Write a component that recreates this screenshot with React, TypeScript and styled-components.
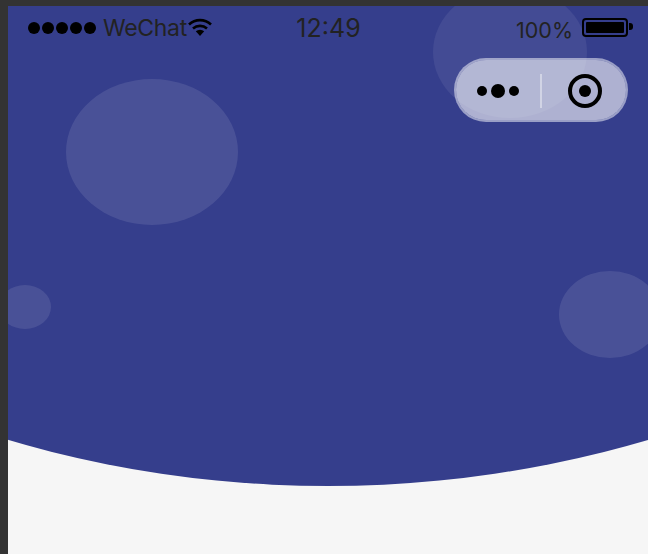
import React from "react";
import styled, { createGlobalStyle } from "styled-components";

const GlobalStyle = createGlobalStyle`
  html, body {
    margin: 0;
    padding: 0;
    height: 100%;
    background: #333333;
  }
`;

const Window = styled.div`
  width: 648px;
  height: 554px;
  padding: 6px 0 0 8px;
  box-sizing: border-box;
  overflow: hidden;
  background: #333333;
`;

const Page = styled.main`
  height: 548px;
  background: #f6f6f6;
  font-family: "Inter", "Liberation Sans", sans-serif;
`;

const Hero = styled.section`
  position: relative;
  height: 482px;
  padding: 0 20px;
  box-sizing: border-box;
  overflow: hidden;
  background: #353e8c;
  clip-path: circle(1136px at 320px -656px);
`;

const Bubble = styled.span<{ $x: number; $y: number; $w: number; $h: number; $alpha: number }>`
  position: absolute;
  left: ${(p) => p.$x}px;
  top: ${(p) => p.$y}px;
  width: ${(p) => p.$w}px;
  height: ${(p) => p.$h}px;
  border-radius: 50%;
  background: rgba(255, 255, 255, ${(p) => p.$alpha});
`;

const StatusBar = styled.header`
  position: relative;
  display: grid;
  grid-template-columns: 1fr auto 1fr;
  align-items: center;
  height: 44px;
  color: #222222;
`;

const StatusLeft = styled.div`
  display: flex;
  align-items: center;
`;

const Signal = styled.div`
  display: flex;
  gap: 2px;
  margin-right: 7px;
`;

const SignalDot = styled.i`
  width: 12px;
  height: 12px;
  border-radius: 50%;
  background: #000;
`;

const Carrier = styled.span`
  font-size: 23px;
  letter-spacing: -0.3px;
`;

const Clock = styled.span`
  font-size: 25px;
  margin: -1px 0 0 1px;
`;

const StatusRight = styled.div`
  display: flex;
  align-items: center;
  justify-content: flex-end;
  gap: 9px;
  margin-top: 4px;
`;

const Percent = styled.span`
  font-size: 21.5px;
`;

const Battery = styled.div`
  position: relative;
  width: 46px;
  height: 19px;
  margin: -6px 0 0 0;
  padding: 2px;
  box-sizing: border-box;
  border: 2px solid #000;
  border-radius: 4px;

  &::before {
    content: "";
    display: block;
    height: 100%;
    border-radius: 1px;
    background: #000;
  }

  &::after {
    content: "";
    position: absolute;
    right: -7px;
    top: 3px;
    width: 4px;
    height: 7px;
    border-radius: 0 3px 3px 0;
    background: #000;
  }
`;

const Capsule = styled.div`
  position: relative;
  display: flex;
  align-items: center;
  width: 174px;
  height: 64px;
  margin: 8px 0 0 426px;
  padding-top: 2px;
  box-sizing: border-box;
  border: 2px solid rgba(255, 255, 255, 0.5);
  border-radius: 32px;
  background: rgba(255, 255, 255, 0.6);
  background-clip: padding-box;
`;

const MenuButton = styled.div`
  flex: 1;
  display: flex;
  align-items: center;
  justify-content: center;
  gap: 4px;
`;

const MenuDot = styled.i<{ $size: number }>`
  width: ${(p) => p.$size}px;
  height: ${(p) => p.$size}px;
  border-radius: 50%;
  background: #000;
`;

const Divider = styled.div`
  width: 2px;
  height: 34px;
  background: rgba(255, 255, 255, 0.4);
`;

const CloseButton = styled.div`
  flex: 1;
  display: flex;
  align-items: center;
  justify-content: center;
`;

const Target = styled.div`
  display: flex;
  align-items: center;
  justify-content: center;
  width: 34px;
  height: 34px;
  margin-left: 2px;
  box-sizing: border-box;
  border: 4px solid #000;
  border-radius: 50%;

  &::after {
    content: "";
    width: 12px;
    height: 12px;
    border-radius: 50%;
    background: #000;
  }
`;

const WifiIcon = () => (
  <svg width="24" height="20" viewBox="0 0 24 20" style={{ marginLeft: 1 }}>
    <path d="M1 6.5 A16 16 0 0 1 23 6.5" fill="none" stroke="#000" strokeWidth="2.6" />
    <path d="M5 10.5 A10.5 10.5 0 0 1 19 10.5" fill="none" stroke="#000" strokeWidth="2.6" />
    <path d="M7.8 13.2 A6.4 6.4 0 0 1 16.2 13.2 L12 18 Z" fill="#000" />
  </svg>
);

const signal = [0, 1, 2, 3, 4];
const bubbles = [
  { x: 58, y: 73, w: 172, h: 146, alpha: 0.1 },
  { x: 425, y: -20, w: 154, h: 132, alpha: 0.07 },
  { x: -9, y: 279, w: 52, h: 44, alpha: 0.1 },
  { x: 551, y: 265, w: 102, h: 87, alpha: 0.1 },
];

export default function App() {
  return (
    <Window>
      <GlobalStyle />
      <Page>
        <Hero>
          {bubbles.map((b) => (
            <Bubble key={b.x} $x={b.x} $y={b.y} $w={b.w} $h={b.h} $alpha={b.alpha} />
          ))}
          <StatusBar>
            <StatusLeft>
              <Signal>
                {signal.map((n) => (
                  <SignalDot key={n} />
                ))}
              </Signal>
              <Carrier>WeChat</Carrier>
              <WifiIcon />
            </StatusLeft>
            <Clock>12:49</Clock>
            <StatusRight>
              <Percent>100%</Percent>
              <Battery />
            </StatusRight>
          </StatusBar>
          <Capsule>
            <MenuButton>
              <MenuDot $size={10} />
              <MenuDot $size={14} />
              <MenuDot $size={10} />
            </MenuButton>
            <Divider />
            <CloseButton>
              <Target />
            </CloseButton>
          </Capsule>
        </Hero>
      </Page>
    </Window>
  );
}
